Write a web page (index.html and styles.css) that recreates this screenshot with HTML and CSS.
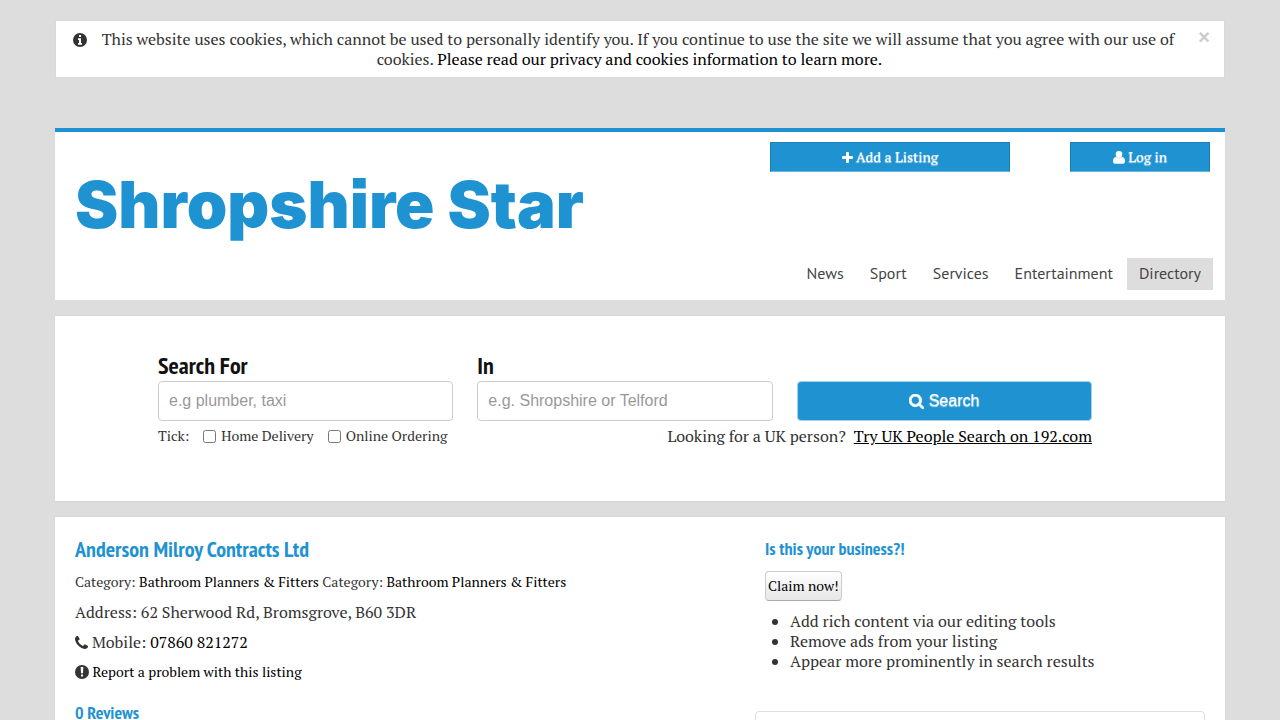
FILE: index.html
```html
<!DOCTYPE html>
<html lang="en">
<head>
<meta charset="utf-8">
<meta name="viewport" content="width=device-width, initial-scale=1">
<title>Anderson Milroy Contracts Ltd - Shropshire Star</title>
<link rel="stylesheet" href="styles.css">
</head>
<body>
<div class="wrap">
  <div class="notice" role="status">
    <button class="notice-close" type="button" aria-label="Close">×</button>
    <p><svg class="icon notice-icon" viewBox="0 0 14 14" aria-hidden="true"><circle cx="7" cy="7" r="7"/><path fill="#fff" d="M6 2h2v2H6zM5 5.300h3v4.700h1v1.700H5V10h1V7H5z"/></svg>This website uses cookies, which cannot be used to personally identify you. If you continue to use the site we will assume that you agree with our use of cookies. <a href="#">Please read our privacy and cookies information to learn more.</a></p>
  </div>

  <header class="masthead">
    <div class="actions">
      <a class="action action-wide" href="#"><svg class="icon" viewBox="0 0 11 11" aria-hidden="true"><path d="M4 1q0-1 1-1h1q1 0 1 1v3h3q1 0 1 1v1q0 1-1 1H7v3q0 1-1 1H5q-1 0-1-1V7H1Q0 7 0 6V5q0-1 1-1h3z"/></svg> Add a Listing</a>
      <a class="action" href="#"><svg class="icon icon-user" viewBox="0 0 12 13" aria-hidden="true"><path d="M6 0a3.300 3.300 0 0 1 3.300 3.400C9.300 5.600 7.800 7 6 7S2.700 5.600 2.700 3.400A3.300 3.300 0 0 1 6 0zM3 6Q6 8.500 9 6q3 .2 3 4.500 0 2.300-2 2.300H2q-2 0-2-2.300Q0 6.200 3 6z"/></svg> Log in</a>
    </div>
    <a class="logo" href="#">Shropshire Star</a>
    <nav class="nav">
      <a href="#">News</a>
      <a href="#">Sport</a>
      <a href="#">Services</a>
      <a href="#">Entertainment</a>
      <a class="current" href="#">Directory</a>
    </nav>
  </header>

  <form class="panel search">
    <div class="field">
      <label for="what">Search For</label>
      <input class="text" id="what" type="text" placeholder="e.g plumber, taxi">
    </div>
    <div class="field">
      <label for="where">In</label>
      <input class="text" id="where" type="text" placeholder="e.g. Shropshire or Telford">
    </div>
    <button class="submit" type="button"><svg class="icon" viewBox="0 128 1664 1664" stroke="currentColor" stroke-width="70" aria-hidden="true"><path d="M1152 832q0-185-131.500-316.500t-316.500-131.500-316.500 131.500-131.500 316.500 131.500 316.500 316.500 131.500 316.500-131.500 131.500-316.500zm512 832q0 52-38 90t-90 38q-54 0-90-38l-343-342q-179 124-399 124-143 0-273.500-55.500t-225-150-150-225-55.500-273.500 55.500-273.500 150-225 225-150 273.500-55.500 273.500 55.500 225 150 150 225 55.500 273.500q0 220-124 399l343 343q37 37 37 90z"/></svg> Search</button>
    <div class="options">
      <span class="tick">Tick:</span>
      <label class="check"><input type="checkbox"> Home Delivery</label>
      <label class="check"><input type="checkbox"> Online Ordering</label>
      <span class="people">Looking for a UK person? <a href="#">Try UK People Search on 192.com</a></span>
    </div>
  </form>

  <main class="panel listing">
    <section class="details">
      <h1>Anderson Milroy Contracts Ltd</h1>
      <p class="small">Category: <a href="#">Bathroom Planners &amp; Fitters</a> Category: <a href="#">Bathroom Planners &amp; Fitters</a></p>
      <p>Address: 62 Sherwood Rd, Bromsgrove, B60 3DR</p>
      <p><svg class="icon icon-phone" viewBox="0 128 1408 1408" aria-hidden="true"><path d="M1408 1240q0 27-10 70.500t-21 68.500q-21 50-122 106-94 51-186 51-27 0-52.500-3.500t-57.500-12.500-47.500-14.500-55.500-20.500-49-18q-98-35-175-83-128-79-264.500-215.500t-215.500-264.500q-48-77-83-175-3-9-18-49t-20.500-55.500-14.500-47.500-12.500-57.500-3.500-52.500q0-92 51-186 56-101 106-122 25-11 68.500-21t70.500-10q14 0 21 3 18 6 53 76 11 19 30 54t35 63.500 31 53.500q3 4 17.500 25t21.500 35.500 7 28.500q0 20-28.500 50t-62 55-62 53-28.500 46q0 9 5 22.500t8.500 20.500 14 24 11.500 19q76 137 174 235t235 174q2 1 19 11.500t24 14 20.500 8.500 22.500 5q18 0 46-28.500t53-62 55-62 50-28.500q14 0 28.500 7t35.500 21.500 25 17.500q25 15 53.500 31t63.500 35 54 30q70 35 76 53 3 7 3 21z"/></svg> Mobile: <a href="#">07860 821272</a></p>
      <p class="small"><svg class="icon" viewBox="0 0 14 14" aria-hidden="true"><circle cx="7" cy="7" r="7"/><path fill="#fff" d="M5.700 2h2.600L8 8.200H6zM6 9.400h2v2.100H6z"/></svg> <a href="#">Report a problem with this listing</a></p>
      <h2 class="reviews">0 Reviews</h2>
    </section>
    <aside class="side">
      <div class="claim">
        <h2>Is this your business?!</h2>
        <button class="claim-button" type="button">Claim now!</button>
        <ul>
          <li>Add rich content via our editing tools</li>
          <li>Remove ads from your listing</li>
          <li>Appear more prominently in search results</li>
        </ul>
      </div>
      <div class="card"></div>
    </aside>
  </main>
</div>
</body>
</html>
```
FILE: styles.css
```css
* { box-sizing: border-box; }

body {
  margin: 0;
  background: #ddd;
  color: #333;
  font: 16px/20px "PT Serif", "Liberation Serif", serif;
}

a { color: #000; text-decoration: none; }
p, h1, h2, ul { margin: 0; }

h1, h2, .field label {
  color: #1f93d2;
  font-family: "PT Sans Narrow", "Liberation Sans Narrow", "Open Sans", sans-serif;
  font-weight: 700;
}

.wrap { max-width: 1170px; margin: 0 auto; padding-top: 20px; }

.icon { width: 14px; height: 14px; fill: currentColor; vertical-align: -2px; }

.notice {
  margin-bottom: 50px;
  padding: 8px 35px 8px 14px;
  border: 1px solid #d9d9d9;
  background: #fff;
  text-align: center;
}
.notice-icon { margin-right: 15px; }
.notice-close {
  float: right;
  width: 33px;
  margin-right: -21px;
  padding: 0;
  border: 0;
  background: none;
  color: #ccc;
  font: 700 20px/16px "Liberation Sans", sans-serif;
  text-align: right;
}

.masthead {
  display: flex;
  flex-direction: column;
  margin-bottom: 16px;
  padding: 10px 12px 10px 20px;
  border-top: 4px solid #1f93d2;
  background: #fff;
}
.actions { display: flex; justify-content: flex-end; gap: 60px; padding-right: 3px; }
.action {
  width: 140px;
  border: 1px solid #1b7fb8;
  border-bottom-color: #69b3de;
  background: #1f93d2;
  color: #fff;
  font-size: 14px;
  line-height: 28px;
  text-align: center;
  text-shadow: 0 1px 1px rgba(255, 255, 255, 0.75);
}
.action-wide { width: 240px; }
.action .icon { width: 11px; height: 11px; vertical-align: -1px; }
.action .icon-user { width: 12px; height: 13px; vertical-align: -2px; }

.logo {
  align-self: flex-start;
  color: #1f93d2;
  font: 900 65px/66px Inter, "Liberation Sans", sans-serif;
  font-feature-settings: "ss07";
}
.nav { display: flex; justify-content: flex-end; gap: 2px; margin-top: 20px; }
.nav a {
  padding: 5px 12px 7px;
  color: #444;
  font: 16px/20px "PT Sans", "Noto Sans", sans-serif;
}
.nav .current { background: #ddd; }

.panel { background: #fff; box-shadow: 0 0 2px #ccc; }

.search {
  display: grid;
  grid-template-columns: repeat(3, 1fr);
  column-gap: 24px;
  align-items: end;
  margin-bottom: 16px;
  padding: 35px 133px 55px 103px;
}
.field label { display: block; color: #111; font-size: 24px; line-height: 30px; }
.text {
  display: block;
  width: 100%;
  height: 40px;
  padding: 0 10px;
  border: 1px solid #ccc;
  border-radius: 4px;
  font: 16px/20px "Liberation Sans", sans-serif;
}
.text::placeholder { color: #999; }
.submit {
  height: 40px;
  border: 1px solid #a5d0ea;
  border-radius: 4px;
  background: #1f93d2;
  color: #fff;
  font: 16px/20px "Liberation Sans", sans-serif;
  text-shadow: 0 1px 1px rgba(255, 255, 255, 0.75);
}
.submit .icon { width: 15px; height: 15px; vertical-align: -3px; }
.options { grid-column: 1 / -1; display: flex; align-items: center; padding-top: 5px; font-size: 14px; }
.tick { margin-right: 14px; }
.check { display: flex; align-items: center; gap: 5px; margin-right: 14px; }
.check input { width: 13px; height: 13px; margin: 0; }
.people { margin-left: auto; font-size: 16px; }
.people a { margin-left: 4px; text-decoration: underline; }

.listing { display: flex; justify-content: space-between; padding: 20px 20px 0; }
.details { flex: 1; }
.details p { margin-bottom: 10px; }
.details .small { font-size: 14px; }
.details h1 { margin-bottom: 10px; font-size: 22px; line-height: 25px; }
.icon-phone { width: 13px; height: 13px; vertical-align: -1px; }
h2 { font-size: 18px; line-height: 24px; }
.reviews { margin-top: 19px; }
.side { width: 450px; }
.claim { padding: 0 10px; }
.claim-button {
  margin: 10px 0;
  padding: 0 2px;
  border: 1px solid #ccc;
  border-bottom-color: #aaa;
  border-radius: 4px;
  background: linear-gradient(#fff, #e6e6e6);
  color: #000;
  font: 14px/28px "PT Serif", "Liberation Serif", serif;
}
.claim ul { padding-left: 25px; }
.card { height: 80px; margin-top: 40px; border: 1px solid #ddd; border-radius: 4px; }
```
